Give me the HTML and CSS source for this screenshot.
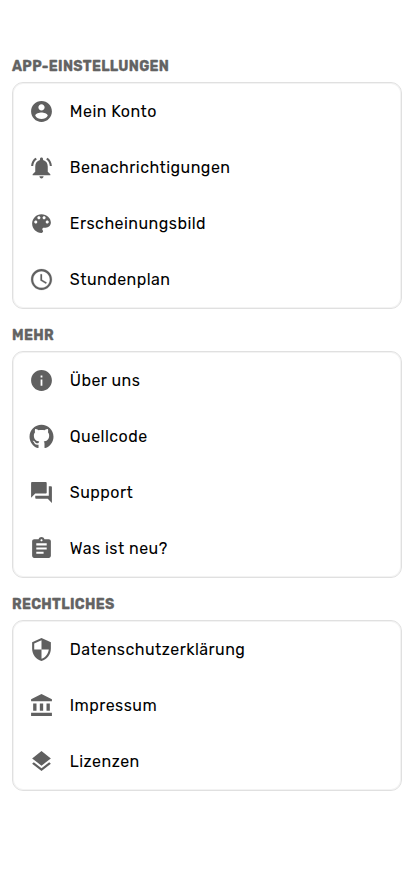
FILE: index.html
```
<!DOCTYPE html>
<html lang="de">
<head>
<meta charset="utf-8">
<meta name="viewport" content="width=device-width, initial-scale=1">
<title>Einstellungen</title>
<link rel="stylesheet" href="styles.css">
</head>
<body>
<main class="settings">
<section class="group">
<h2 class="heading">APP-EINSTELLUNGEN</h2>
<ul class="card">
<li class="row"><svg class="icon" viewBox="0 0 24 24"><path d="M12 2C6.480 2 2 6.480 2 12s4.480 10 10 10 10-4.480 10-10S17.520 2 12 2zm0 3c1.660 0 3 1.340 3 3s-1.340 3-3 3-3-1.340-3-3 1.340-3 3-3zm0 14.200c-2.500 0-4.710-1.280-6-3.220.030-1.990 4-3.080 6-3.080 1.990 0 5.970 1.090 6 3.080-1.290 1.940-3.500 3.220-6 3.220z"/></svg><span class="label">Mein Konto</span></li>
<li class="row"><svg class="icon" viewBox="0 0 24 24"><path d="M7.580 4.080L6.150 2.650C3.750 4.480 2.170 7.300 2.030 10.500h2c.150-2.650 1.510-4.970 3.550-6.420zm12.390 6.420h2c-.150-3.200-1.730-6.020-4.120-7.850l-1.420 1.430c2.020 1.450 3.390 3.770 3.540 6.420zM18 11c0-3.070-1.640-5.640-4.500-6.320V4c0-.830-.670-1.500-1.500-1.500s-1.500.670-1.500 1.500v.680C7.630 5.360 6 7.920 6 11v5l-2.500 2.500v1h17v-1L18 16v-5zm-6 11.500c1.100 0 2-.900 2-2h-4c0 1.100.900 2 2 2z"/></svg><span class="label">Benachrichtigungen</span></li>
<li class="row"><svg class="icon" viewBox="0 0 24 24"><path d="M12 3c-4.970 0-9 4.030-9 9s4.030 9 9 9c.830 0 1.500-.670 1.500-1.500 0-.390-.150-.740-.390-1.010-.230-.260-.380-.610-.380-.990 0-.830.670-1.500 1.500-1.500H16c2.760 0 5-2.240 5-5 0-4.420-4.030-8-9-8zm-5.500 9c-.830 0-1.500-.670-1.500-1.500S5.670 9 6.500 9 8 9.670 8 10.500 7.330 12 6.500 12zm3-4C8.670 8 8 7.330 8 6.500S8.670 5 9.500 5s1.500.670 1.500 1.500S10.330 8 9.500 8zm5 0c-.830 0-1.500-.670-1.500-1.500S13.670 5 14.500 5s1.500.670 1.500 1.500S15.330 8 14.500 8zm3 4c-.830 0-1.500-.670-1.500-1.500S16.670 9 17.500 9s1.500.670 1.500 1.500-.670 1.500-1.500 1.500z"/></svg><span class="label">Erscheinungsbild</span></li>
<li class="row"><svg class="icon thick" viewBox="0 0 24 24"><path d="M11.990 2C6.470 2 2 6.480 2 12s4.470 10 9.990 10C17.520 22 22 17.520 22 12S17.520 2 11.990 2zM12 20c-4.420 0-8-3.580-8-8s3.580-8 8-8 8 3.580 8 8-3.580 8-8 8zm.500-13H11v6l5.250 3.150.750-1.230-4.500-2.670z"/></svg><span class="label">Stundenplan</span></li>
</ul>
</section>
<section class="group">
<h2 class="heading">MEHR</h2>
<ul class="card">
<li class="row"><svg class="icon" viewBox="0 0 24 24"><path d="M12 2C6.480 2 2 6.480 2 12s4.480 10 10 10 10-4.480 10-10S17.520 2 12 2zm.850 15h-1.700v-6h1.700v6zm0-8h-1.700V7.200h1.700V9z"/></svg><span class="label">Über uns</span></li>
<li class="row"><svg class="icon" viewBox="0 0 24 24"><path d="M12 .700C5.650.700.500 5.850.500 12.200c0 5.080 3.300 9.400 7.860 10.920.580.110.790-.250.790-.560v-2.700c-3.200.700-3.880-1.360-3.880-1.360-.520-1.330-1.280-1.680-1.280-1.680-1.040-.710.080-.700.080-.700 1.160.080 1.770 1.190 1.770 1.190 1.030 1.760 2.700 1.250 3.350.950.100-.740.400-1.250.730-1.540-2.560-.290-5.250-1.280-5.250-5.690 0-1.260.450-2.290 1.190-3.100-.120-.290-.520-1.460.110-3.050 0 0 .970-.310 3.170 1.180.920-.260 1.900-.380 2.880-.390.980.010 1.960.130 2.880.390 2.190-1.490 3.160-1.180 3.160-1.180.630 1.590.230 2.760.110 3.050.740.810 1.190 1.840 1.190 3.100 0 4.420-2.700 5.400-5.270 5.680.410.360.780 1.060.780 2.130v3.730c0 .310.210.670.800.560 4.560-1.520 7.850-5.840 7.850-10.910C23.500 5.850 18.350.700 12 .700z"/></svg><span class="label">Quellcode</span></li>
<li class="row"><svg class="icon" viewBox="0 0 24 24"><path d="M21 6h-2v9H6v2c0 .550.450 1 1 1h11l4 4V7c0-.550-.450-1-1-1zm-4 6V3c0-.550-.450-1-1-1H3c-.550 0-1 .450-1 1v14l4-4h10c.550 0 1-.450 1-1z"/></svg><span class="label">Support</span></li>
<li class="row"><svg class="icon" viewBox="0 0 24 24"><path d="M19 3h-4.180C14.400 1.840 13.300 1 12 1s-2.400.840-2.820 2H5c-1.100 0-2 .900-2 2v14c0 1.100.900 2 2 2h14c1.100 0 2-.900 2-2V5c0-1.100-.900-2-2-2zm-7 0c.550 0 1 .450 1 1s-.450 1-1 1-1-.450-1-1 .450-1 1-1zm2 14H7v-2h7v2zm3-4H7v-2h10v2zm0-4H7V7h10v2z"/></svg><span class="label">Was ist neu?</span></li>
</ul>
</section>
<section class="group">
<h2 class="heading">RECHTLICHES</h2>
<ul class="card">
<li class="row"><svg class="icon" viewBox="0 0 24 24"><path d="M12 1L3 5v6c0 5.550 3.840 10.740 9 12 5.160-1.260 9-6.450 9-12V5l-9-4zm0 10.990h7c-.530 4.120-3.280 7.790-7 8.940V12H5V6.300l7-3.110v8.800z"/></svg><span class="label">Datenschutzerklärung</span></li>
<li class="row"><svg class="icon" viewBox="0 0 24 24"><path d="M4 10v7h3.200v-7H4zm6.400 0v7h3.200v-7h-3.200zM2 22h20v-3H2v3zm14.800-12v7H20v-7h-3.200zM12 1L2 6v2h20V6L12 1z"/></svg><span class="label">Impressum</span></li>
<li class="row"><svg class="icon" viewBox="0 0 24 24"><path d="M11.990 18.540l-7.370-5.730L3 14.070l9 7 9-7-1.630-1.270-7.380 5.740zM12 16l7.360-5.730L21 9l-9-7-9 7 1.630 1.270L12 16z"/></svg><span class="label">Lizenzen</span></li>
</ul>
</section>
</main>
</body>
</html>
```
FILE: styles.css
```
* { box-sizing: border-box; }
body {
  margin: 0;
  background: #fff;
  color: #000;
  font-family: Rubik, Roboto, "Liberation Sans", sans-serif;
}
.settings {
  display: flex;
  flex-direction: column;
  gap: 16px;
  padding: 56px 12px 0;
}
.heading {
  margin: 0;
  height: 26px;
  padding-top: 1px;
  font-size: 14px;
  line-height: 20px;
  font-weight: 700;
  letter-spacing: .32px;
  -webkit-text-stroke: .3px #636363;
  color: #636363;
}
.card {
  margin: 0;
  padding: .5px 0;
  list-style: none;
  border: 1px solid #e0e0e0;
  border-radius: 11px;
  box-shadow: inset 0 0 0 1px #f3f3f3;
}
.row {
  display: flex;
  align-items: center;
  gap: 16px;
  height: 56px;
  padding-left: 15.8px;
}
.icon {
  flex: none;
  width: 25px;
  height: 25px;
  fill: #606060;
}
.thick {
  stroke: #606060;
  stroke-width: .2;
}
.label {
  font-size: 16px;
  line-height: 24px;
  letter-spacing: .46px;
  white-space: nowrap;
}
```
